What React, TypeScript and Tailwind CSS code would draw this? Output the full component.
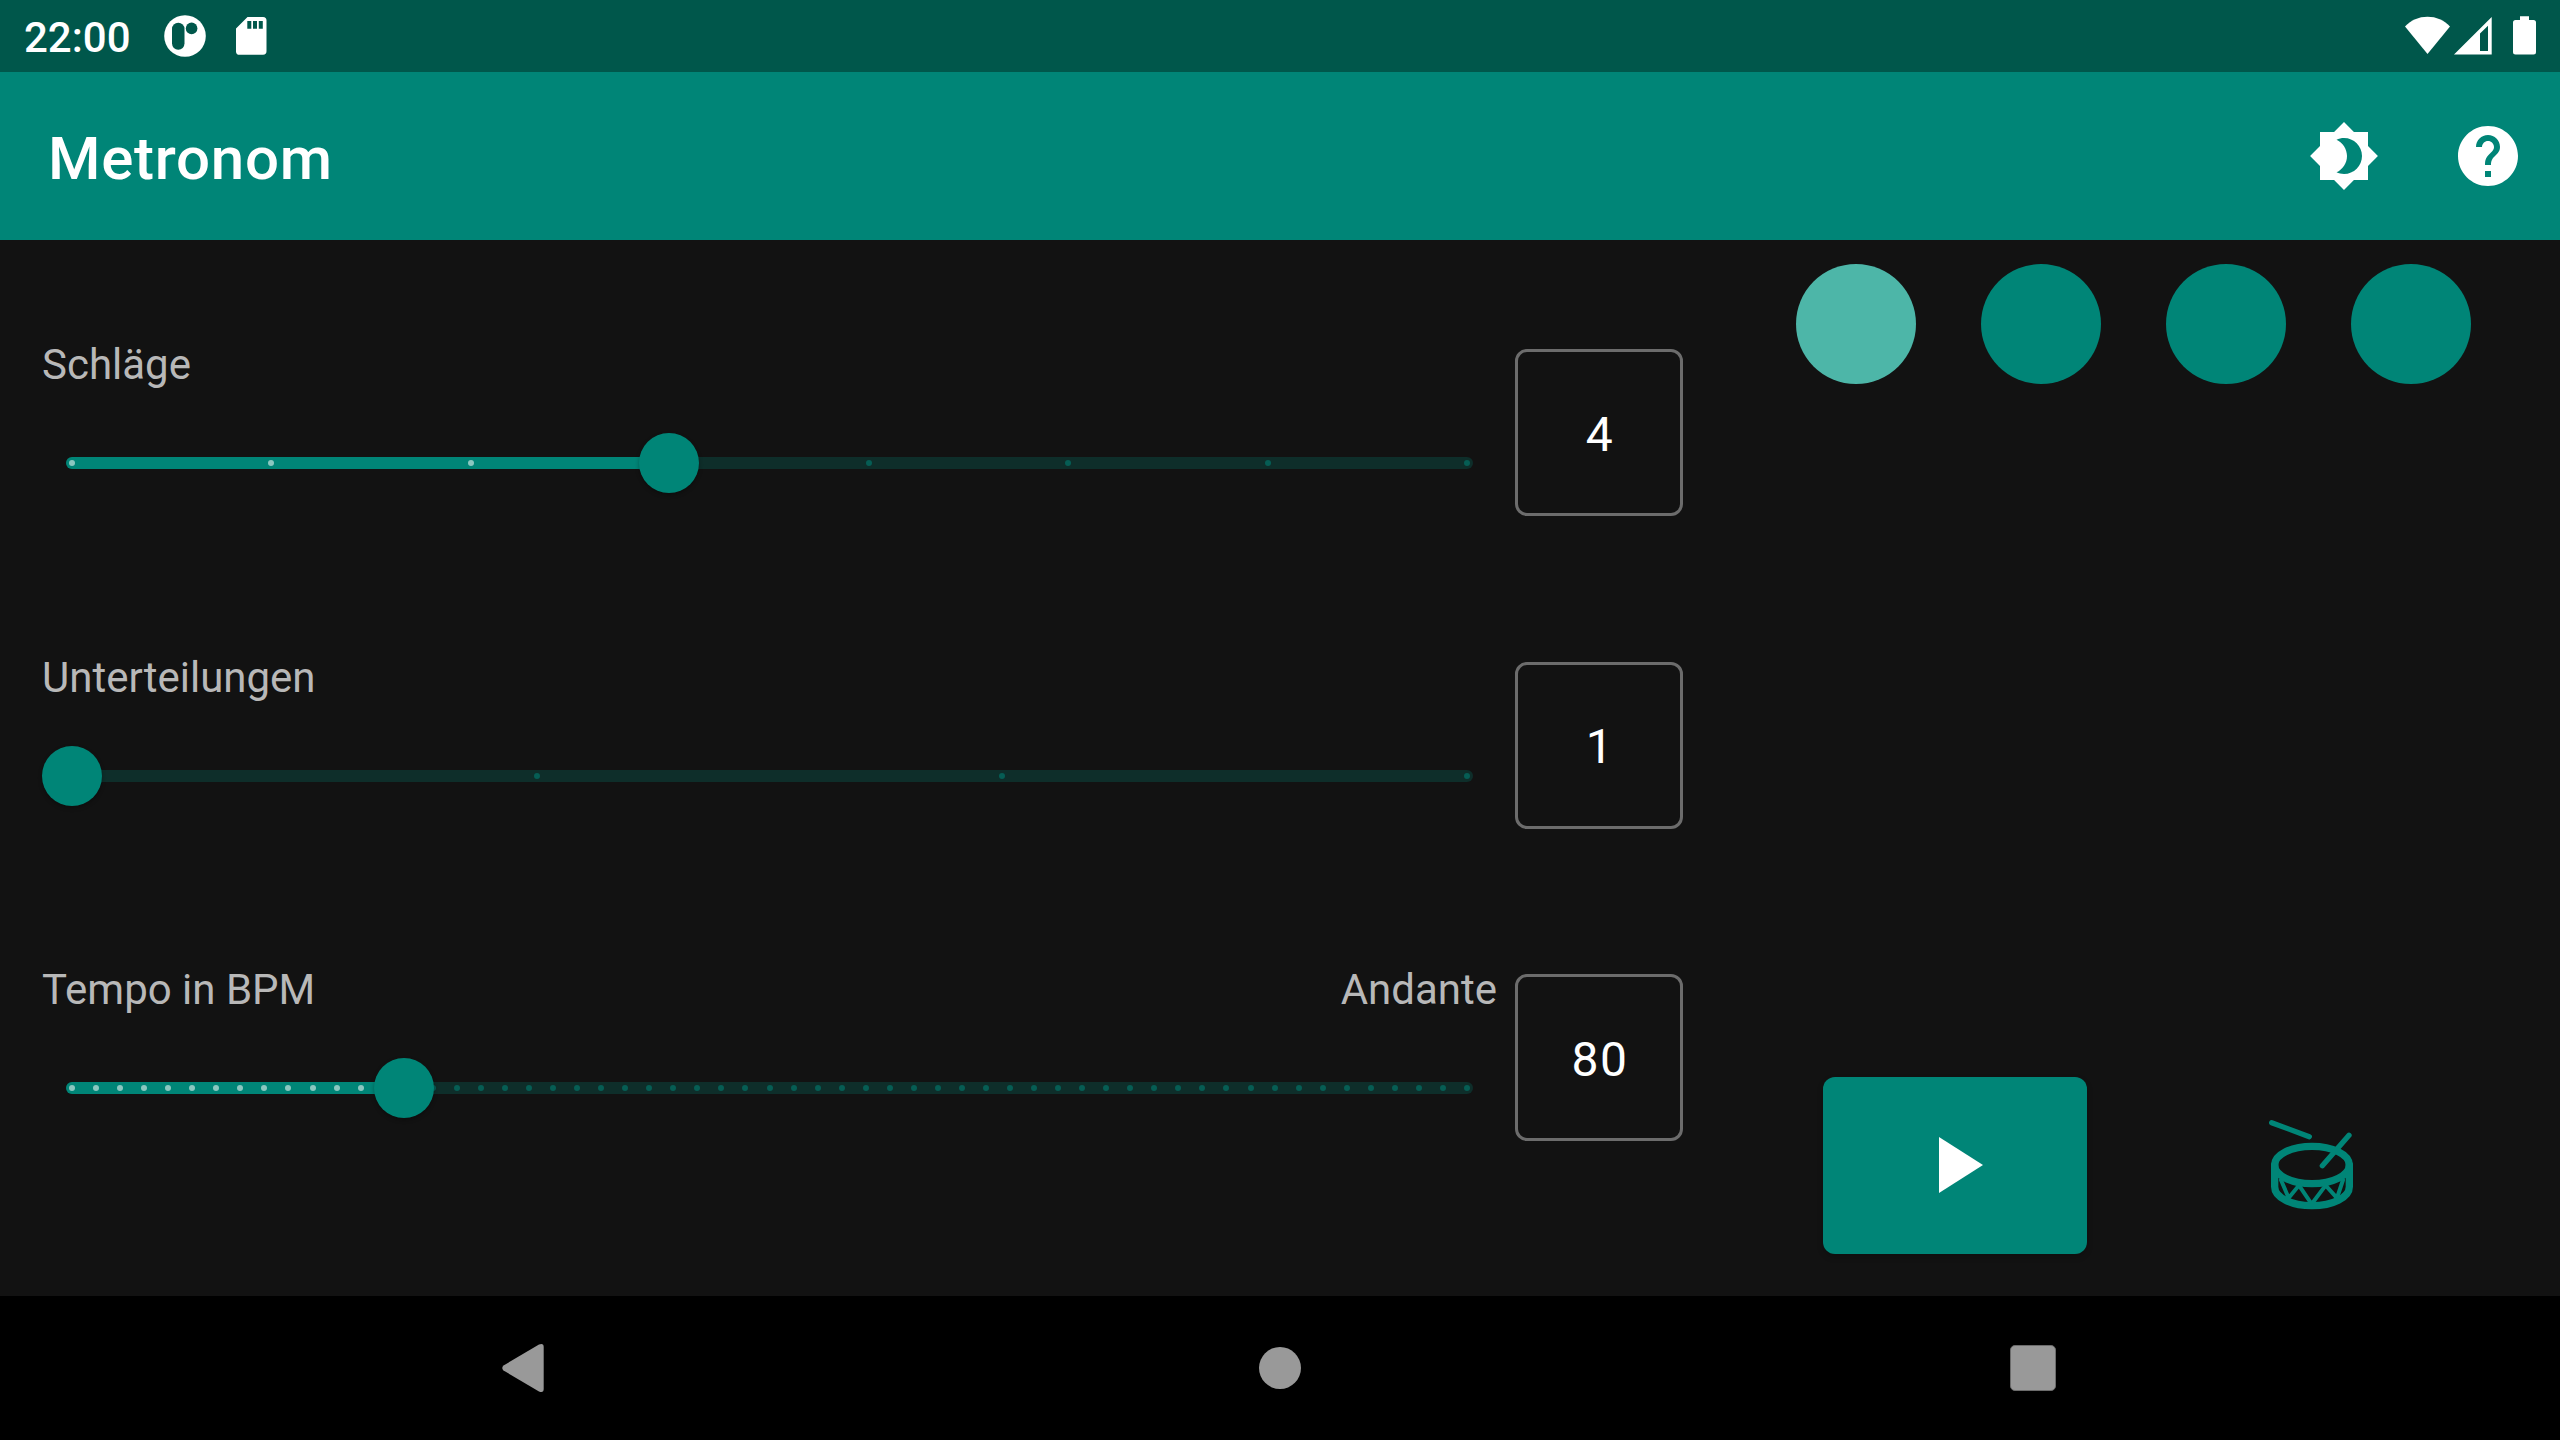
type SliderProps = {
  label: string;
  note?: string;
  value: number;
  min: number;
  max: number;
  ticks: number;
};

const TRACK_WIDTH = 1395;

function Slider({ value, min, max, ticks }: SliderProps) {
  const pos = Math.floor(((value - min) / (max - min)) * TRACK_WIDTH);
  return (
    <div className="mt-11 flex h-[60px] items-center px-6">
      <div className="relative h-3 w-full rounded-full bg-[#0e2e2a] px-1.5">
        <div className="relative h-full w-full">
          <div
            className="absolute -left-1.5 top-0 h-3 rounded-l-full bg-[#008577]"
            style={{ width: pos + 6 }}
          />
          {Array.from({ length: ticks }, (_, i) => {
            const at = (i / (ticks - 1)) * TRACK_WIDTH;
            return (
              <div
                key={i}
                className={`absolute top-[3px] -ml-[3px] size-1.5 rounded-full ${
                  at <= pos ? "bg-[#8ac7c0]" : "bg-[#065d54]"
                }`}
                style={{ left: at }}
              />
            );
          })}
          <div
            className="absolute -top-6 -ml-[30px] size-[60px] rounded-full bg-[#008577] shadow-[0_2px_4px_rgba(0,0,0,0.3)]"
            style={{ left: pos }}
          />
        </div>
      </div>
    </div>
  );
}

function SliderRow(props: SliderProps) {
  return (
    <div className="flex h-[312.5px]">
      <div className="w-[1455px]">
        <div className="flex justify-between text-[42px] leading-[49px] text-[#b8b8b8]">
          <span>{props.label}</span>
          {props.note && <span>{props.note}</span>}
        </div>
        <Slider {...props} />
      </div>
      <div className="ml-[18px] mt-[9px] flex h-[167px] w-[168px] items-center justify-center rounded-xl border-3 border-[#6c6c6c] pl-[2px] pt-1 text-5xl tracking-[1.5px] text-white">
        {props.value}
      </div>
    </div>
  );
}

function StatusBar() {
  return (
    <div className="flex h-[72px] items-center justify-between bg-[#00574b] pl-6 pr-[23px] text-white">
      <div className="flex items-center">
        <span className="w-[140px] pt-[3px] text-[42px] font-medium leading-[69px]">22:00</span>
        <svg width="42" height="42" viewBox="0 0 42 42">
          <circle cx="21" cy="21" r="20.8" fill="white" />
          <rect x="8" y="7.7" width="12.5" height="27" rx="6.2" fill="#00574b" />
          <circle cx="27.6" cy="13.4" r="5.8" fill="#00574b" />
        </svg>
        <svg className="ml-[30px]" width="31" height="38" viewBox="0 0 31 38">
          <path
            fill="white"
            fillRule="evenodd"
            d="M11.5 0H27a3.5 3.5 0 0 1 3.5 3.5V34a3.7 3.7 0 0 1-3.5 3.8H3.5A3.7 3.7 0 0 1 0 34V11.5zM11.3 4v7.7h4V4zM17 4v7.7h4V4zM22.8 4v7.7h4V4z"
          />
        </svg>
      </div>
      <svg width="132" height="40" viewBox="0 0 132 40" fill="white">
        <path d="M0 10.6C6.2 4 13.6.7 22.5.7S38.800 4 45 10.600L22.500 38z" />
        <path fillRule="evenodd" d="M49 38.500 86.700 1v37.500zM75 17.500v17.500h8V9.800z" />
        <path d="M115 .2h9V4h4.500a2.500 2.500 0 0 1 2.500 2.500V36a2.500 2.500 0 0 1-2.500 2.500h-18A2.500 2.500 0 0 1 108 36V6.500A2.500 2.500 0 0 1 110.500 4H115z" />
      </svg>
    </div>
  );
}

function AppBar() {
  return (
    <div className="flex h-[168px] items-center bg-[#008577] pl-12 pr-9 text-white">
      <h1 className="flex-1 pt-[6px] text-[60px] font-medium leading-none tracking-[0.75px]">Metronom</h1>
      <div className="flex gap-[72px]">
        <svg className="size-[72px]" viewBox="0 0 24 24" fill="currentColor">
          <path d="M20 8.690V4h-4.690L12 .690 8.690 4H4v4.690L.690 12 4 15.310V20h4.690L12 23.310 15.310 20H20v-4.690L23.310 12 20 8.690zM12 18c-.890 0-1.740-.200-2.500-.550C11.560 16.500 13 14.420 13 12s-1.440-4.500-3.500-5.450C10.260 6.200 11.110 6 12 6c3.310 0 6 2.690 6 6s-2.690 6-6 6z" />
        </svg>
        <svg className="size-[72px]" viewBox="0 0 24 24" fill="currentColor">
          <path d="M12 2C6.480 2 2 6.480 2 12s4.480 10 10 10 10-4.480 10-10S17.520 2 12 2zm1 17h-2v-2h2v2zm2.070-7.750l-.900.920C13.450 12.900 13 13.500 13 15h-2v-.500c0-1.100.450-2.100 1.170-2.830l1.240-1.260c.370-.360.590-.860.590-1.410 0-1.100-.900-2-2-2s-2 .900-2 2H8c0-2.210 1.790-4 4-4s4 1.790 4 4c0 .880-.360 1.680-.930 2.250z" />
        </svg>
      </div>
    </div>
  );
}

function DrumIcon() {
  return (
    <svg className="size-[140px]" viewBox="0 0 420 420" fill="none" stroke="#008577" strokeLinecap="round">
      <ellipse cx="216" cy="225" rx="112" ry="56" strokeWidth="22" />
      <path d="M104 225v65c0 32 50 57 112 57s112-25 112-57v-65" strokeWidth="22" />
      <path d="M123 270 146 324 177 286 215 342 257 286 291 324 309 270" strokeWidth="12" />
      <path d="M95 98 208 140M327 136 247 227" strokeWidth="16" />
    </svg>
  );
}

export default function App() {
  return (
    <div className="flex h-[1440px] w-[2560px] flex-col overflow-hidden bg-[#121212] font-[Roboto,sans-serif]">
      <StatusBar />
      <AppBar />
      <main className="flex h-[1056px]">
        <section className="w-[1683px] pl-[42px] pt-[100px]">
          <SliderRow label="Schläge" value={4} min={1} max={8} ticks={8} />
          <SliderRow label="Unterteilungen" value={1} min={1} max={4} ticks={4} />
          <SliderRow label="Tempo in BPM" note="Andante" value={80} min={30} max={240} ticks={59} />
        </section>
        <section className="flex flex-1 flex-col justify-between pb-[42px] pl-[113px] pt-6">
          <div className="flex gap-[65px]">
            <div className="size-[120px] rounded-full bg-[#4db6a8]" />
            <div className="size-[120px] rounded-full bg-[#008577]" />
            <div className="size-[120px] rounded-full bg-[#008577]" />
            <div className="size-[120px] rounded-full bg-[#008577]" />
          </div>
          <div className="flex h-[177px] pl-[27px]">
            <button className="flex h-[177px] w-[264px] items-center justify-center rounded-xl bg-[#008577] shadow-[0_3px_6px_rgba(0,0,0,0.2)]">
              <svg className="-mt-px size-24" viewBox="0 0 24 24" fill="white">
                <path d="M8 5v14l11-7z" />
              </svg>
            </button>
            <div className="ml-[153px] mt-[13px]">
              <DrumIcon />
            </div>
          </div>
        </section>
      </main>
      <nav className="flex h-36 items-center bg-black pl-[502px]">
        <svg width="42" height="50" viewBox="0 0 42 50">
          <path
            d="M1.500 22.500 37 1.500Q41.700-.300 41.700 4V46Q41.700 50.300 37 48.500L1.500 27.500Q-1 25 1.500 22.500z"
            fill="#999"
          />
        </svg>
        <div className="ml-[715px] size-[42px] rounded-full bg-[#999]" />
        <div className="ml-[709px] size-[46px] rounded-[5px] border border-[#6b6b6b] bg-[#999]" />
      </nav>
    </div>
  );
}
